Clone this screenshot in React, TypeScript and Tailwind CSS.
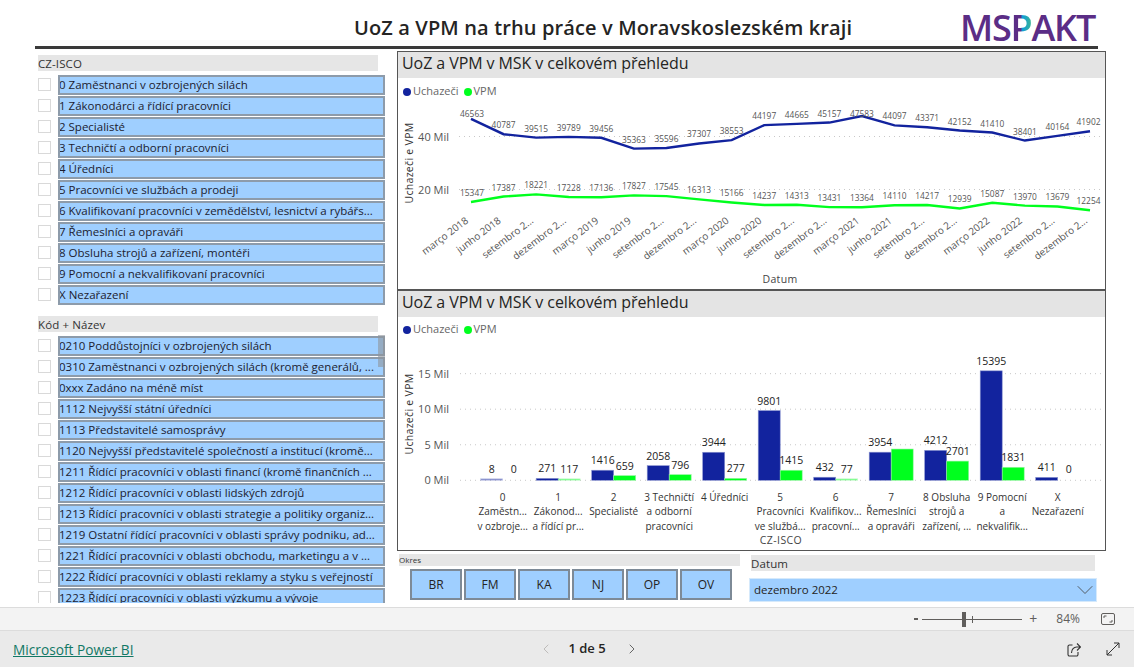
import { ChevronDown, ChevronLeft, ChevronRight } from 'lucide-react';

const UI_FONT = "font-['Open_Sans','Noto_Sans',sans-serif]";

// ── Data ───────────────────────────────────────────────────────
const ISCO = [
  '0 Zaměstnanci v ozbrojených silách',
  '1 Zákonodárci a řídící pracovníci',
  '2 Specialisté',
  '3 Techničtí a odborní pracovníci',
  '4 Úředníci',
  '5 Pracovníci ve službách a prodeji',
  '6 Kvalifikovaní pracovníci v zemědělství, lesnictví a rybářs...',
  '7 Řemeslníci a opraváři',
  '8 Obsluha strojů a zařízení, montéři',
  '9 Pomocní a nekvalifikovaní pracovníci',
  'X Nezařazení',
];

const CODES = [
  '0210 Poddůstojníci v ozbrojených silách',
  '0310 Zaměstnanci v ozbrojených silách (kromě generálů, ...',
  '0xxx Zadáno na méně míst',
  '1112 Nejvyšší státní úředníci',
  '1113 Představitelé samosprávy',
  '1120 Nejvyšší představitelé společností a institucí (kromě...',
  '1211 Řídící pracovníci v oblasti financí (kromě finančních ...',
  '1212 Řídící pracovníci v oblasti lidských zdrojů',
  '1213 Řídící pracovníci v oblasti strategie a politiky organiz...',
  '1219 Ostatní řídící pracovníci v oblasti správy podniku, ad...',
  '1221 Řídící pracovníci v oblasti obchodu, marketingu a v ...',
  '1222 Řídící pracovníci v oblasti reklamy a styku s veřejností',
  '1223 Řídící pracovníci v oblasti výzkumu a vývoje',
];

const UOZ = [46563, 40787, 39515, 39789, 39456, 35363, 35596, 37307, 38553, 44197, 44665, 45157, 47583, 44097, 43371, 42152, 41410, 38401, 40164, 41902];
const VPM = [15347, 17387, 18221, 17228, 17136, 17827, 17545, 16313, 15166, 14237, 14313, 13431, 13364, 14110, 14217, 12939, 15087, 13970, 13679, 12254];
const MONTHS = ['março 2018', 'junho 2018', 'setembro 2...', 'dezembro 2...', 'março 2019', 'junho 2019', 'setembro 2...', 'dezembro 2...', 'março 2020', 'junho 2020', 'setembro 2...', 'dezembro 2...', 'março 2021', 'junho 2021', 'setembro 2...', 'dezembro 2...', 'março 2022', 'junho 2022', 'setembro 2...', 'dezembro 2...'];

const BARS: { uoz: number; vpm: number; vpmLabel?: boolean; label: string[] }[] = [
  { uoz: 8, vpm: 0, label: ['0', 'Zaměstn...', 'v ozbroje...'] },
  { uoz: 271, vpm: 117, label: ['1', 'Zákonod...', 'a řídící pr...'] },
  { uoz: 1416, vpm: 659, label: ['2', 'Specialisté'] },
  { uoz: 2058, vpm: 796, label: ['3 Techničtí', 'a odborní', 'pracovníci'] },
  { uoz: 3944, vpm: 277, label: ['4 Úředníci'] },
  { uoz: 9801, vpm: 1415, label: ['5', 'Pracovníci', 've službá...'] },
  { uoz: 432, vpm: 77, label: ['6', 'Kvalifikov...', 'pracovní...'] },
  { uoz: 3954, vpm: 4400, vpmLabel: false, label: ['7', 'Řemeslníci', 'a opraváři'] },
  { uoz: 4212, vpm: 2701, label: ['8 Obsluha', 'strojů a', 'zařízení, ...'] },
  { uoz: 15395, vpm: 1831, label: ['9 Pomocní', 'a', 'nekvalifik...'] },
  { uoz: 411, vpm: 0, label: ['X', 'Nezařazení'] },
];

// ── Slicers ────────────────────────────────────────────────────
function SlicerRow({ text }: { text: string }) {
  return (
    <div className="flex items-center h-[21px] shrink-0">
      <span className="w-[13px] h-[13px] border border-[#d9d9d9] bg-white shrink-0" />
      <span className="ml-[7px] w-[327px] h-[20px] border-2 border-[#8d9baa] bg-[#9fcfff] text-[11.5px] leading-[16px] indent-[-1px] text-[#1c1c30] whitespace-nowrap overflow-hidden">
        {text}
      </span>
    </div>
  );
}

function SlicerHeader({ text }: { text: string }) {
  return <div className="w-[340px] h-[16px] bg-[#e6e6e6] text-[11.5px] leading-[17px] text-[#333] tracking-[0.1px]">{text}</div>;
}

function Legend() {
  return (
    <div className="flex items-center h-[13px] pl-[5px] text-[11px] text-[#666]">
      <span className="w-[8px] h-[8px] rounded-full bg-[#12239e]" />
      <span className="ml-[2px]">Uchazeči</span>
      <span className="ml-[5px] w-[8px] h-[8px] rounded-full bg-[#00ff1e]" />
      <span className="ml-[2px]">VPM</span>
    </div>
  );
}

function PanelTitle() {
  return (
    <div className="h-[26px] bg-[#e4e4e4] pl-[4px] text-[16px] leading-[23px] tracking-[-0.08px] text-[#252423] whitespace-nowrap">
      UoZ a VPM v MSK v celkovém přehledu
    </div>
  );
}

// ── Line chart ─────────────────────────────────────────────────
// svg origin = page (398, 100)
function LineChart() {
  const px = (i: number) => 73 + i * 32.58;
  const py = (v: number) => 36.3 + (40000 - v) * 0.002665;
  const path = (vals: number[]) => vals.map((v, i) => `${px(i)},${py(v)}`).join(' ');
  // the two highest points keep their label closer to the line
  const uozLift = (i: number) => (i === 12 ? -1 : i === 0 ? 2 : 6);
  const labelX = (i: number) => px(i) + (i === 0 ? 1 : i === 19 ? -1.5 : 0);
  return (
    <svg width="706" height="186" className="block">
      {[36.5, 89.5].map((y) => (
        <line key={y} x1="61" x2="705" y1={y} y2={y} stroke="#c8c8c8" strokeDasharray="1 4" />
      ))}
      <text x="51" y="40.5" textAnchor="end" fontSize="11" fill="#555">40 Mil</text>
      <text x="51" y="93.5" textAnchor="end" fontSize="11" fill="#555">20 Mil</text>
      <text transform="translate(15,63) rotate(-90)" textAnchor="middle" fontSize="10.5" letterSpacing="0.3" fill="#333">Uchazeči e VPM</text>
      <polyline points={path(UOZ)} fill="none" stroke="#12239e" strokeWidth="2.4" />
      <polyline points={path(VPM)} fill="none" stroke="#00ff1e" strokeWidth="2.4" />
      {UOZ.map((v, i) => (
        <text key={i} x={labelX(i)} y={py(v) - uozLift(i)} textAnchor="middle" fontSize="8.4" fill="#555">{v}</text>
      ))}
      {VPM.map((v, i) => (
        <text key={i} x={labelX(i)} y={py(v) - 6} textAnchor="middle" fontSize="8.4" fill="#555">{v}</text>
      ))}
      {MONTHS.map((m, i) => (
        <text key={i} transform={`translate(${px(i) - 2},122) rotate(-37)`} textAnchor="end" fontSize="10" fill="#555">{m}</text>
      ))}
      <text x="382" y="183" textAnchor="middle" fontSize="10.5" letterSpacing="0.3" fill="#444">Datum</text>
    </svg>
  );
}

// ── Bar chart ──────────────────────────────────────────────────
// svg origin = page (398, 336)
function BarChart() {
  const base = 144.3;
  const k = 0.00711;
  return (
    <svg width="706" height="212" className="block">
      {[0, 5, 10, 15].map((m) => {
        const y = base - m * 1000 * k;
        return (
          <g key={m}>
            <line x1="62" x2="705" y1={y} y2={y} stroke="#c8c8c8" strokeDasharray="1 4" />
            <text x="51" y={y + 4} textAnchor="end" fontSize="11" fill="#555">{m} Mil</text>
          </g>
        );
      })}
      <text transform="translate(15,78) rotate(-90)" textAnchor="middle" fontSize="10.5" letterSpacing="0.3" fill="#333">Uchazeči e VPM</text>
      {BARS.map((b, i) => {
        const x = 82.7 + i * 55.5;
        const hu = Math.max(b.uoz * k, 1.5);
        const hv = Math.max(b.vpm * k, 1.5);
        return (
          <g key={i}>
            <rect x={x} y={base - hu} width="22" height={hu} fill="#12239e" stroke="#8a93cf" strokeWidth="0.6" opacity={b.uoz < 50 ? 0.5 : 1} />
            {b.vpm > 0 && (
              <rect x={x + 22} y={base - hv} width="22" height={hv} fill="#00ff1e" stroke="#9af5a5" strokeWidth="0.6" opacity={b.vpm < 150 ? 0.5 : 1} />
            )}
            <text x={x + 11} y={base - hu - 6} textAnchor="middle" fontSize="10.5" fill="#222">{b.uoz}</text>
            {b.vpmLabel !== false && (
              <text x={x + 33} y={base - (b.vpm > 0 ? hv : 1) - 6} textAnchor="middle" fontSize="10.5" fill="#222">{b.vpm}</text>
            )}
            {b.label.map((line, n) => (
              <text key={n} x={x + 22} y={165 + n * 14.3} textAnchor="middle" fontSize="10" fill="#333">{line}</text>
            ))}
          </g>
        );
      })}
      <text x="383" y="208" textAnchor="middle" fontSize="10.5" letterSpacing="0.4" fill="#444">CZ-ISCO</text>
    </svg>
  );
}

// ── Main layout ────────────────────────────────────────────────
export default function App() {
  return (
    <div className={`${UI_FONT} w-[1134px] h-[667px] bg-white overflow-hidden flex flex-col`}>
      <div className="h-[607px] shrink-0 overflow-hidden">
        {/* Title + logo */}
        <header className="h-[49px] ml-[35px] w-[1063px] border-b-[3px] border-[#3a3a3a] flex items-start">
          <h1 className="ml-[319px] mt-[14px] w-[498px] text-[20px] leading-[28px] font-semibold tracking-[0.13px] text-[#252423] whitespace-nowrap">
            UoZ a VPM na trhu práce v Moravskoslezském kraji
          </h1>
          <div className="ml-[108px] mt-[5px] text-[36px] leading-[46px] font-semibold tracking-[-1.2px] text-[#5b2d86] whitespace-nowrap">
            MS
            <span className="bg-[linear-gradient(90deg,#5b2d86_45%,#0f9ed8_55%,#3fb58f_100%)] bg-clip-text text-transparent">P</span>
            AKT
          </div>
        </header>

        <div className="flex">
          {/* Slicers */}
          <div className="ml-[38px] w-[347px] shrink-0">
            <div className="mt-[6px]"><SlicerHeader text="CZ-ISCO" /></div>
            <div className="mt-[3px] flex flex-col">
              {ISCO.map((t) => <SlicerRow key={t} text={t} />)}
            </div>
            <div className="mt-[11px]"><SlicerHeader text="Kód + Název" /></div>
            <div className="relative mt-[3px] h-[268px] overflow-hidden flex flex-col">
              {CODES.map((t) => <SlicerRow key={t} text={t} />)}
              <span className="absolute right-0 top-0 w-[7px] h-[32px] bg-[#8f959b]/60" />
            </div>
          </div>

          {/* Charts */}
          <div className="ml-[12px] w-[709px] shrink-0">
            <section className="mt-[2px] h-[239px] border border-[#555] overflow-hidden">
              <PanelTitle />
              <div className="mt-[7px] mb-[2px]"><Legend /></div>
              <LineChart />
            </section>
            <section className="h-[261px] border border-[#555] overflow-hidden">
              <PanelTitle />
              <div className="mt-[6px]"><Legend /></div>
              <BarChart />
            </section>

            <div className="flex">
              {/* Okres */}
              <div className="w-[341px] ml-[2px] mt-[3px]">
                <div className="h-[12px] bg-[#e6e6e6] text-[8px] leading-[12px] text-[#333]">Okres</div>
                <div className="ml-[11px] mt-[3px] flex gap-[2px]">
                  {['BR', 'FM', 'KA', 'NJ', 'OP', 'OV'].map((k) => (
                    <div key={k} className="w-[52px] h-[31px] border-2 border-[#7d8a97] bg-[#9fcfff] flex items-center justify-center text-[12px] text-[#252423]">
                      {k}
                    </div>
                  ))}
                </div>
              </div>
              {/* Datum */}
              <div className="ml-[9px] w-[348px] mt-[4px]">
                <div className="ml-[2px] w-[344px] h-[16px] bg-[#e6e6e6] text-[11.5px] leading-[17px] tracking-[0.1px] text-[#333]">Datum</div>
                <div className="mt-[7px] h-[24px] bg-[#9fcfff] border border-[#d5e9fb] pl-[4px] flex items-center justify-between text-[11.5px] text-[#252423]">
                  dezembro 2022
                  <ChevronDown size={28} strokeWidth={0.7} className="mr-[-3px] text-[#444]" />
                </div>
              </div>
            </div>
          </div>
        </div>
      </div>

      {/* Zoom bar */}
      <div className="h-[24px] shrink-0 bg-[#f3f3f3] border-y border-[#dcdcdc] flex items-center justify-end text-[#605e5c]">
        <span className="w-[4px] h-[2px] bg-[#605e5c]" />
        <div className="relative ml-[4px] w-[100px] h-[1px] bg-[#605e5c]">
          <span className="absolute left-[40px] top-[-7px] w-[4px] h-[15px] bg-[#605e5c]" />
          <span className="absolute left-[50px] top-[-3px] w-[1px] h-[7px] bg-[#605e5c]" />
        </div>
        <span className="ml-[7px] text-[14px] leading-none">+</span>
        <span className="ml-[19px] text-[12px]">84%</span>
        <svg width="14" height="12" viewBox="0 0 14 12" fill="none" stroke="#605e5c" className="ml-[21px] mr-[19px]">
          <rect x="0.5" y="0.5" width="13" height="11" rx="1.5" />
          <path d="M3 5V3h2.5M11 7v2H8.5" />
        </svg>
      </div>

      {/* Page nav */}
      <footer className="flex-1 bg-[#eaeaea] flex items-center relative">
        <a className="ml-[13px] mt-[2px] text-[13.7px] underline text-[#117865]">Microsoft Power BI</a>
        <div className="absolute left-[538px] flex items-center text-[#252423]">
          <ChevronLeft size={16} strokeWidth={1.2} className="text-[#b3b0ad]" />
          <span className="ml-[10px] w-[46px] text-center text-[13px] font-semibold">1 de 5</span>
          <ChevronRight size={16} strokeWidth={1.2} className="ml-[14px] text-[#444]" />
        </div>
        <div className="ml-auto mr-[14px] flex items-center gap-[25px] text-[#333]">
          <svg width="14" height="15" viewBox="0 0 14 15" fill="none" stroke="#333" strokeWidth="1.1">
            <path d="M5.5 3H2.5a1.5 1.5 0 0 0-1.5 1.5v8A1.5 1.5 0 0 0 2.5 14h7a1.5 1.5 0 0 0 1.5-1.5V10" />
            <path d="M4.5 11c0-3.5 2.5-6 5-6h3.5M10 1.5L13.5 5 10 8.5" />
          </svg>
          <svg width="14" height="14" viewBox="0 0 14 14" fill="none" stroke="#333" strokeWidth="1">
            <path d="M1 13L13 1M8 1h5v5M1 8v5h5" />
          </svg>
        </div>
      </footer>
    </div>
  );
}
